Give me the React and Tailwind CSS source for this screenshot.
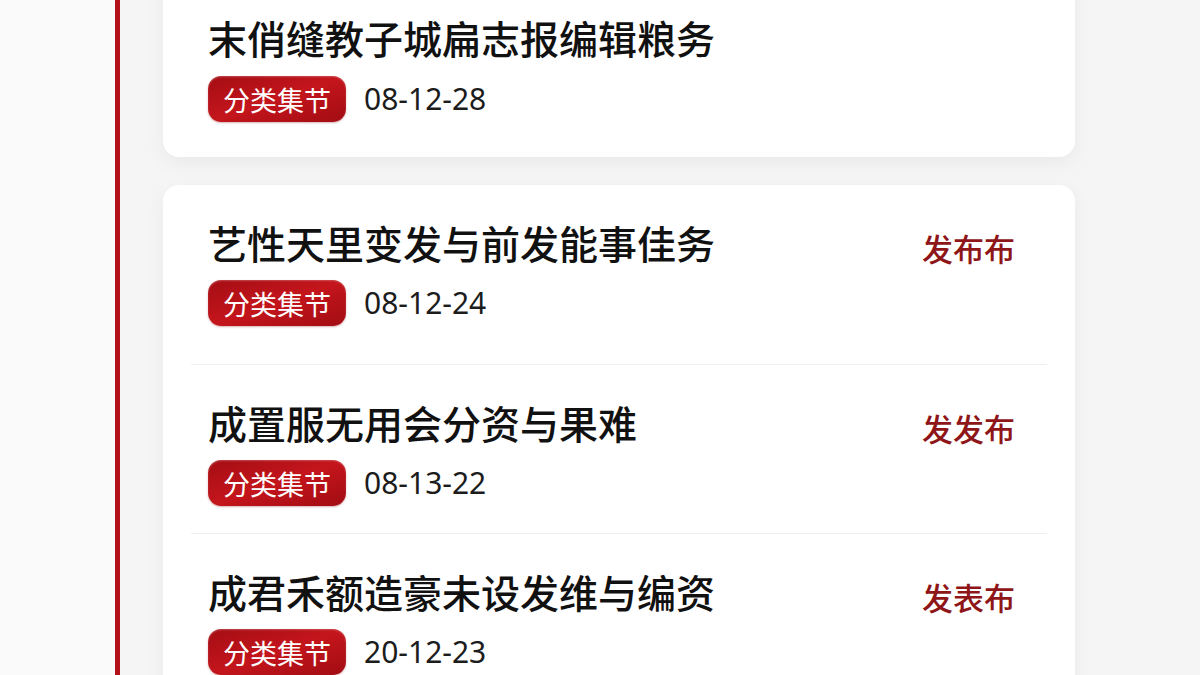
import React from "react";

const cjk = { fontFamily: '"Noto Sans CJK SC", "Noto Sans", sans-serif' };
const latin = { fontFamily: '"Noto Sans", "Noto Sans CJK SC", sans-serif' };

const topItem = { title: "末俏缝教子城扁志报编辑粮务", date: "08-12-28" };

const items = [
  { title: "艺性天里变发与前发能事佳务", date: "08-12-24", action: "发布布" },
  { title: "成置服无用会分资与果难", date: "08-13-22", action: "发发布" },
  { title: "成君禾额造豪未设发维与编资", date: "20-12-23", action: "发表布" },
];

const Tag = () => (
  <span
    className="inline-flex items-center h-[46px] px-[15px] rounded-[13px] text-white text-[27px] leading-none bg-gradient-to-br from-[#a50d14] via-[#c4151c] to-[#a20c13] shadow-[inset_0_1px_2px_rgba(255,255,255,0.25),0_1px_2px_rgba(120,0,0,0.3)]"
    style={cjk}
  >
    分类集节
  </span>
);

const Title = ({ children }) => (
  <h3
    className="text-[39px] leading-[50px] font-medium text-[#111111] whitespace-nowrap"
    style={cjk}
  >
    {children}
  </h3>
);

const Meta = ({ date }) => (
  <div className="flex items-center gap-[18px]">
    <Tag />
    <span className="text-[30px] text-[#1c1c1c] leading-none" style={latin}>
      {date}
    </span>
  </div>
);

const Row = ({ item, first }) => (
  <div className="border-b border-[#efefef] mx-[28px]">
    <div
      className={
        "flex items-start justify-between pl-[17px] pr-[32px] pt-[32px] " +
        (first ? "pb-[38px]" : "pb-[27px]")
      }
    >
      <div className="flex flex-col gap-[13px]">
        <Title>{item.title}</Title>
        <Meta date={item.date} />
      </div>
      <span
        className="mt-[9px] text-[31px] leading-[44px] font-medium text-[#8e1518]"
        style={cjk}
      >
        {item.action}
      </span>
    </div>
  </div>
);

export default function App() {
  return (
    <div className="w-[1200px] h-[675px] overflow-hidden flex bg-[#f7f7f8]">
      <div className="w-[115px] shrink-0 bg-[#fafafa]" />
      <div className="flex-1 border-l-[5px] border-[#b3121a] pl-[43px] bg-[#f5f5f6]">
        <div className="w-[912px] flex flex-col gap-[28px]">
          {/* top card, partly scrolled off */}
          <div className="bg-white rounded-b-2xl -mt-[24px] shadow-[0_6px_20px_rgba(0,0,0,0.05)]">
            <div className="pl-[45px] pt-[36px] pb-[35px] flex flex-col gap-[14px]">
              <Title>{topItem.title}</Title>
              <Meta date={topItem.date} />
            </div>
          </div>

          {/* list card */}
          <div className="bg-white rounded-2xl shadow-[0_6px_20px_rgba(0,0,0,0.05)]">
            {items.map((it, i) => (
              <Row key={i} item={it} first={i === 0} />
            ))}
          </div>
        </div>
      </div>
    </div>
  );
}
